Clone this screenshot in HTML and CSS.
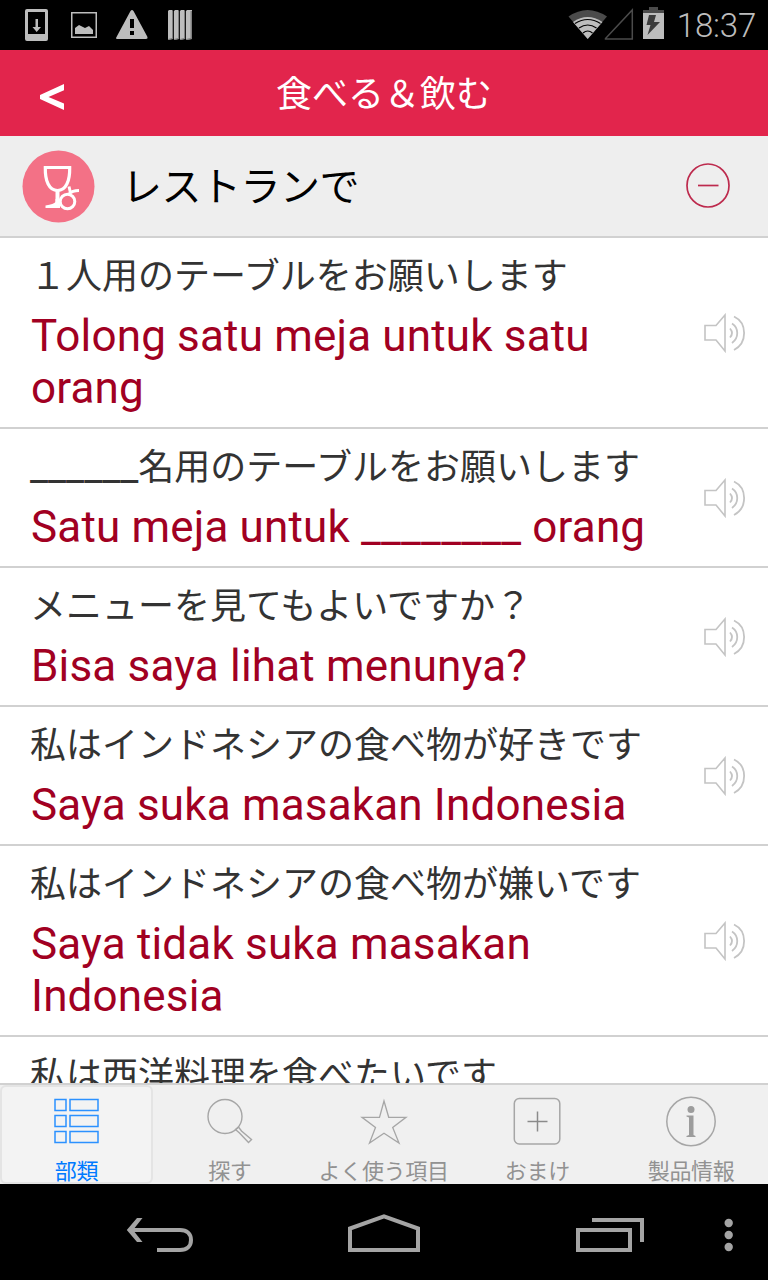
FILE: index.html
```html
<!DOCTYPE html>
<html lang="ja">
<head>
<meta charset="utf-8">
<title>食べる＆飲む</title>
<link rel="stylesheet" href="styles.css">
</head>
<body>
<svg class="defs" width="0" height="0">
  <symbol id="speaker" viewBox="0 0 44 40">
    <path d="M2 12.500H13L22 2V38L13 27H2Z" stroke-width="1.600"/>
    <path d="M27 15.500Q31 20 27 24.500M29 10.500C36 15 36 25 29 30M31 3.500C44.500 10 44.500 30 31 37" stroke-width="1.800"/>
  </symbol>
</svg>
<div class="screen">
  <div class="status">
    <svg class="status-left" width="200" height="50" viewBox="0 0 200 50" fill="#bdbdbd">
      <path fill-rule="evenodd" d="M27 9H46Q48 9 48 11V39Q48 41 46 41H27Q25 41 25 39V11Q25 9 27 9ZM28 12V34H45V12Z"/>
      <path d="M35.500 19H38V27H41L36.700 32L32.500 27H35.500Z"/>
      <path fill-rule="evenodd" d="M71 12H97V38H71ZM72.500 13.500V36.500H95.500V13.500Z"/>
      <path d="M75 34V28L79 25L85 28L89 26L93 30V34Z"/>
      <path fill-rule="evenodd" d="M130.500 11Q132 9 133.500 11L147.500 37Q148 39 146 39H118Q115 39 116.500 37ZM130 19V28H134V19ZM130 31V35H134V31Z"/>
      <path d="M168 11L169 10H172.500V39L168 40ZM174 11L175 10H178.500V39L174 40ZM180 11L181 10H184.500V39L180 40ZM186 11L187 10H192V39L186 40Z"/>
      <path d="M172 11H173.200V39L168 40V39L172 38ZM178 11H179.200V39L174 40V39L178 38ZM184 11H185.200V39L180 40V39L184 38ZM190.500 11H192V39L186 40V39L190.500 38Z" fill="#808080"/>
    </svg>
    <svg width="102" height="50" viewBox="566 0 102 50">
      <path d="M568.500 16.500Q587.500 3.500 607 16.500L587.700 39Z" fill="#4b4b4b"/>
      <path d="M573 22Q587.500 12 602.500 22L587.700 39Z" fill="#bdbdbd"/>
      <path d="M575 23.500Q587.700 15.500 600.500 23.500M579 28Q587.700 22 596.500 28M583 33Q587.700 29 592.500 33" fill="none" stroke="#000" stroke-width="1.200"/>
      <path d="M605.500 39V38.500L632.300 10V39Z" fill="none" stroke="#4b4b4b" stroke-width="1.500"/>
      <path d="M643 13V10H649V7H658V10H664V13Z" fill="#4b4b4b"/>
      <path d="M643 13H664V39H643Z" fill="#bdbdbd"/>
      <path d="M649 15H656L654 22H660L647.500 35L650.500 25H646.500Z" fill="#3c3c3c"/>
    </svg>
    <span class="clock">18:37</span>
  </div>
  <div class="titlebar">
    <svg class="back" width="30" height="30" viewBox="37 82 30 30"><path d="M64 84V90.300L48.500 97L64 103.500V110L40 99V95Z" fill="#fff"/></svg>
    <h1 class="title">食べる＆飲む</h1>
  </div>
  <div class="section">
    <svg class="badge" width="74" height="74" viewBox="22 150 74 74">
      <circle cx="58.500" cy="186.500" r="36" fill="#f37186"/>
      <g fill="none" stroke="#fff" stroke-width="3.200">
        <path d="M45.300 167.500H69.700C70 181 66 190.500 57.500 190.500C49 190.500 45 181 45.300 167.500Z"/>
        <path d="M57.500 190V206" stroke-width="4"/>
      </g>
      <path d="M55.500 199H60V208H45.500V205.500Q54 204 55.500 202Z" fill="#fff"/>
      <circle cx="67.500" cy="201.500" r="7.300" fill="#f37186" stroke="#fff" stroke-width="3"/>
      <path d="M69 194Q72 190.500 79 190.500M70.500 193L69 186.500" fill="none" stroke="#fff" stroke-width="3"/>
    </svg>
    <h2 class="section-title">レストランで</h2>
    <svg class="collapse" width="46" height="46" viewBox="0 0 46 46" fill="none" stroke="#bd2a4d"><ellipse cx="23" cy="22.500" rx="21" ry="21.500" stroke-width="1.700"/><path d="M13 22.500H33.500" stroke-width="1.700"/></svg>
  </div>
  <div class="list">
    <div class="row"><div><div class="ja">１人用のテーブルをお願いします</div><div class="id">Tolong satu meja untuk satu<br>orang</div></div><svg class="speaker"><use href="#speaker"/></svg></div>
    <div class="row"><div><div class="ja"><span class="blank">______</span>名用のテーブルをお願いします</div><div class="id">Satu meja untuk ________ orang</div></div><svg class="speaker"><use href="#speaker"/></svg></div>
    <div class="row"><div><div class="ja">メニューを見てもよいですか？</div><div class="id">Bisa saya lihat menunya?</div></div><svg class="speaker"><use href="#speaker"/></svg></div>
    <div class="row"><div><div class="ja">私はインドネシアの食べ物が好きです</div><div class="id">Saya suka masakan Indonesia</div></div><svg class="speaker"><use href="#speaker"/></svg></div>
    <div class="row"><div><div class="ja">私はインドネシアの食べ物が嫌いです</div><div class="id">Saya tidak suka masakan<br>Indonesia</div></div><svg class="speaker"><use href="#speaker"/></svg></div>
    <div class="row"><div><div class="ja">私は西洋料理を食べたいです</div></div></div>
  </div>
  <div class="tabs">
    <div class="tab active">
      <svg class="tab-icon" viewBox="0 0 50 52" fill="none" stroke="#2b91ff" stroke-width="1.500"><path d="M3 4.500H14V15.500H3ZM18 4.500H46V15.500H18ZM3 20.500H14V31.500H3ZM18 20.500H46V31.500H18ZM3 36.500H14V47.500H3ZM18 36.500H46V47.500H18Z"/></svg>
      <span>部類</span>
    </div>
    <div class="tab">
      <svg class="tab-icon" viewBox="0 0 50 52" fill="none" stroke="#a6a6a6" stroke-width="1.400"><circle cx="20" cy="21.500" r="17"/><path d="M30.500 34.500L33.500 32L36.500 36L46.500 44.500L43.500 47.500L34.500 38Z"/></svg>
      <span>探す</span>
    </div>
    <div class="tab">
      <svg class="tab-icon" viewBox="0 0 50 52" fill="none" stroke="#a6a6a6" stroke-width="1.300"><path d="M25 6L29.700 22.300H47L33.700 32.500L40 48L25 38.200L10.500 48L16.500 32.500L3 22.300H20.500Z"/></svg>
      <span>よく使う項目</span>
    </div>
    <div class="tab">
      <svg class="tab-icon" viewBox="0 0 50 52" fill="none" stroke="#a6a6a6" stroke-width="1.500"><rect x="2.300" y="3.500" width="45.500" height="45.500" rx="5"/><path d="M15.500 26.500H35.500M25.500 16.500V36.500" stroke="#8b8b8b"/></svg>
      <span>おまけ</span>
    </div>
    <div class="tab">
      <svg class="tab-icon" viewBox="0 0 50 52"><circle cx="25" cy="26.500" r="24.200" fill="none" stroke="#a6a6a6" stroke-width="1.500"/><g fill="#9c9c9c"><circle cx="25" cy="14.500" r="3.500"/><path d="M20.500 20.500H27.500V40L29.500 41V42H20.500V41L23 40V22.500L20.500 21.500Z"/></g></svg>
      <span>製品情報</span>
    </div>
  </div>
  <div class="nav">
    <svg width="768" height="96" viewBox="0 1184 768 96" fill="none" stroke="#a4a4a4" stroke-width="4">
      <path d="M131 1230H180C187 1230 191 1234 191 1240S187 1250 180 1250H157"/>
      <path d="M137 1218H142.500L133 1230L142.500 1242H137L126.800 1230Z" fill="#a4a4a4" stroke="none"/>
      <path d="M350 1250V1228.500L384 1216.300L418 1228.500V1250Z"/>
      <path d="M578 1230H630V1250H578ZM592 1220H642V1242"/>
      <g fill="#a4a4a4" stroke="none"><circle cx="728.700" cy="1223" r="4.200"/><circle cx="728.700" cy="1235" r="4.200"/><circle cx="728.700" cy="1247" r="4.200"/></g>
    </svg>
  </div>
</div>
</body>
</html>
```
FILE: styles.css
```css
* { box-sizing: border-box; }
body { margin: 0; background: #000; font-family: Roboto, "Noto Sans CJK JP", sans-serif; }
svg { display: block; flex: none; }
.defs { position: absolute; }
.screen { display: flex; flex-direction: column; width: 768px; height: 1280px; overflow: hidden; background: #fff; }
.status { display: flex; flex: none; height: 50px; background: #000; }
.status-left { margin-right: auto; }
.clock { width: 88px; margin-right: 12px; text-align: right; font-size: 33px; line-height: 51px; font-weight: 300; letter-spacing: -0.2px; color: #bdbdbd; }
.titlebar { display: flex; flex: none; align-items: center; height: 86px; padding: 0 37px; background: #e2254c; color: #fff; }
.back { margin-top: 8px; }
.title { flex: 1; margin: -4px 30px 0 0; text-align: center; font: 400 36px/84px "Noto Sans CJK JP", sans-serif; }
.section { display: flex; flex: none; align-items: center; height: 102px; padding: 0 37px 0 22px; border-bottom: 2px solid #d1d1d1; background: #eee; }
.badge { margin-top: 2px; }
.section-title { margin: -4px auto 0 26px; font: 400 40px/100px "Noto Sans CJK JP", sans-serif; color: #000; letter-spacing: -0.5px; }
.list { flex: 1; min-height: 0; overflow: hidden; }
.row { display: flex; align-items: center; justify-content: space-between; padding: 8px 21px 12px 30px; border-bottom: 2px solid #d1d1d1; white-space: nowrap; }
.ja { height: 54px; margin-bottom: 10px; font: 400 36px/54px "Noto Sans CJK JP", sans-serif; color: #333; }
.blank { font-family: Roboto, sans-serif; font-size: 40px; line-height: 1; }
.id { margin-bottom: 1px; padding-left: 1px; font-size: 44px; line-height: 52px; letter-spacing: 0.17px; color: #a10022; }
.speaker { width: 44px; height: 40px; margin-top: 4px; fill: none; stroke: #c4c4c4; }
.tabs { display: flex; flex: none; height: 101px; border-top: 2px solid #d1d1d1; background: #f0f0f0; font: 400 22px/30px "Noto Sans CJK JP", sans-serif; color: #929292; }
.tab { display: flex; flex: 1 1 0; flex-direction: column; align-items: center; min-width: 0; padding-top: 10px; letter-spacing: -0.3px; white-space: nowrap; }
.tab.active { flex: 0 0 153px; padding: 8px 0 0; border: 2px solid #e4e4e4; border-radius: 6px; background: #f3f3f3; color: #007aff; }
.tab-icon { width: 50px; height: 52px; margin-bottom: 7px; }
.nav { flex: none; height: 96px; background: #000; }
```
